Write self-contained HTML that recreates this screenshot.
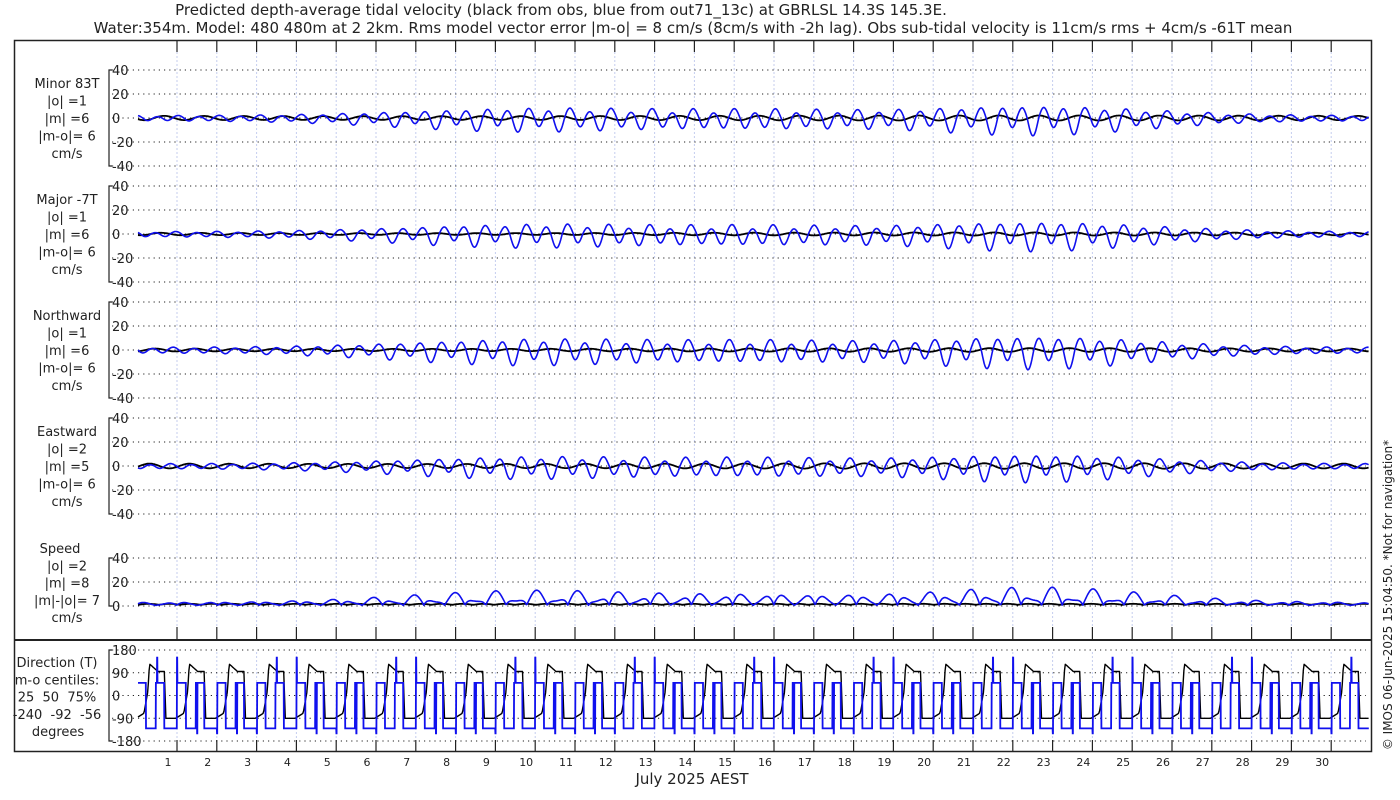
<!DOCTYPE html>
<html><head><meta charset="utf-8"><style>
html,body{margin:0;padding:0;background:#fff;width:1400px;height:800px;overflow:hidden}
svg{display:block;font-family:"DejaVu Sans","Liberation Sans",sans-serif}
text{white-space:pre}
</style></head><body>
<svg id="s" width="1400" height="800" viewBox="0 0 1400 800" xmlns="http://www.w3.org/2000/svg" xml:space="preserve">
<rect width="1400" height="800" fill="#fff"/>
<g font-size="15" fill="#222" text-anchor="middle">
<text x="561" y="15">Predicted depth-average tidal velocity (black from obs, blue from out71_13c) at GBRLSL 14.3S 145.3E.</text>
<text x="693" y="33">Water:354m. Model: 480 480m at 2 2km. Rms model vector error |m-o| = 8 cm/s (8cm/s with -2h lag). Obs sub-tidal velocity is 11cm/s rms + 4cm/s -61T mean</text>
</g>
<g id="grid"></g>
<g id="data"></g>
<rect x="14.5" y="40.5" width="1357" height="711" fill="none" stroke="#222" stroke-width="1.5"/>
<line x1="14" y1="640" x2="1372" y2="640" stroke="#222" stroke-width="2"/>
<g id="txt" font-size="13" fill="#222"></g>
<text x="692" y="784" font-size="15" fill="#222" text-anchor="middle">July 2025 AEST</text>
<text transform="translate(1392,595) rotate(-90)" font-size="12" fill="#222" text-anchor="middle">© IMOS 06-Jun-2025 15:04:50. *Not for navigation*</text>
</svg>
<script>
(function(){
var NS="http://www.w3.org/2000/svg";
function el(p,t,a,txt){var e=document.createElementNS(NS,t);for(var k in a)e.setAttribute(k,a[k]);if(txt!=null){e.setAttributeNS("http://www.w3.org/XML/1998/namespace","xml:space","preserve");e.textContent=txt;}p.appendChild(e);return e;}
var G=document.getElementById('grid'),D=document.getElementById('data'),T=document.getElementById('txt');
var X0=138,DX=39.8,XE=1369;
function X(t){return X0+t*DX;}
for(var d=1;d<=30;d++){var x=177+39.8*(d-1);
 el(G,'line',{x1:x,y1:52,x2:x,y2:627,stroke:'#c4cdee','stroke-width':1,'stroke-dasharray':'2,2'});
 el(G,'line',{x1:x,y1:652,x2:x,y2:740,stroke:'#c4cdee','stroke-width':1,'stroke-dasharray':'2,2'});
 el(G,'line',{x1:x,y1:40,x2:x,y2:52,stroke:'#222','stroke-width':1.2});
 el(G,'line',{x1:x,y1:627,x2:x,y2:640,stroke:'#222','stroke-width':1.2});
 el(G,'line',{x1:x,y1:740,x2:x,y2:751,stroke:'#222','stroke-width':1.2});
 el(T,'text',{x:168+39.8*(d-1),y:766,'font-size':11,'text-anchor':'middle'},String(d));
}
function axis(tp,vals,step){
 var bot=tp+step*(vals.length-1);
 el(G,'path',{d:'M112,'+tp+'H109V'+bot+'H112',fill:'none',stroke:'#222','stroke-width':1.2});
 for(var i=0;i<vals.length;i++){var y=tp+i*step;
  el(G,'line',{x1:112,y1:y,x2:1366,y2:y,stroke:'#222','stroke-width':1,'stroke-dasharray':'1.2,4'});
  el(T,'text',{x:112,y:y+5},vals[i]);}
}
var labels=[["Minor 83T","|o| =1","|m| =6","|m-o|= 6","cm/s"],["Major -7T","|o| =1","|m| =6","|m-o|= 6","cm/s"],["Northward","|o| =1","|m| =6","|m-o|= 6","cm/s"],["Eastward","|o| =2","|m| =5","|m-o|= 6","cm/s"]];
for(var p=0;p<4;p++){var tp=70+116*p;axis(tp,["40","20","0","-20","-40"],24);
 for(var j=0;j<5;j++)el(T,'text',{x:67,y:tp+18+j*17.5,'text-anchor':'middle'},labels[p][j]);}
axis(558,["40","20","0"],24);
var sl=["Speed","|o| =2","|m| =8","|m|-|o|= 7","cm/s"];
for(var j=0;j<5;j++)el(T,'text',{x:j==0?60:67,y:553+j*17.3,'text-anchor':'middle'},sl[j]);
axis(650,["180","90","0","-90","-180"],22.75);
var dl=["Direction (T)","m-o centiles:","25  50  75%","-240  -92  -56","degrees"];
for(var j=0;j<5;j++)el(T,'text',{x:j==4?58:57,y:667+j*17.3,'text-anchor':'middle'},dl[j]);
function env(t){return 2+7*Math.exp(-Math.pow((t-10)/4.5,2))+9*Math.exp(-Math.pow((t-22.5)/4,2))+4*Math.exp(-Math.pow((t-16)/3,2));}
var W=2*Math.PI/0.5175;
function blue(t,ph,sc){var e=env(t)*sc;var v=e*Math.cos(W*t+ph)+0.3*e*Math.cos(2*Math.PI*t/1.0+ph*0.5);return v<0?v*1.15:v*0.85;}
function black(t,ph,a){return a*Math.cos(2*Math.PI*t/1.0+ph)+0.3*Math.sin(W*t*0.5+ph);}
function path(f,y0,sc,col,w,lo,hi){var s='';for(var t=0;t<=31;t+=0.02){var x=X(t);if(x>XE)break;var v=f(t);if(v>hi)v=hi;if(v<lo)v=lo;s+=(s?'L':'M')+x.toFixed(1)+','+(y0-v*sc).toFixed(1);}
 el(D,'path',{d:s,fill:'none',stroke:col,'stroke-width':w,'stroke-linejoin':'round'});}
var phs=[0.3,1.0,1.8,2.6],sc=[0.9,0.9,1.0,0.85],ba=[1.8,1.0,1.2,2.0];
for(var p=0;p<4;p++){(function(p){var y0=118+116*p;
 path(function(t){return black(t,phs[p]+2,ba[p]);},y0,1.2,'#000',1.8,-40,40);
 path(function(t){return blue(t,phs[p],sc[p]);},y0,1.2,'#1010ee',1.6,-40,40);})(p);}
path(function(t){return 1+0.8*Math.abs(Math.sin(Math.PI*t*1.9));},606,1.2,'#000',1.8,0,40);
path(function(t){return 0.5+1.4*env(t)*Math.pow(Math.abs(Math.sin(Math.PI*t/0.5175+0.4)),0.8)*(0.65+0.35*Math.cos(2*Math.PI*t));},606,1.2,'#1010ee',1.6,0,40);
function bdir(t){var f=((t+0.05)%1+1)%1;
 if(f<0.2)return -90+(f/0.2)*20;
 if(f<0.3)return -70+(f-0.2)/0.1*90;
 if(f<0.34)return 20+(f-0.3)/0.04*105;
 if(f<0.55)return 125-(f-0.34)/0.21*30;
 if(f<0.72)return 95;
 if(f<0.74)return 95-(f-0.72)/0.02*185;
 return -90+(f-0.74)/0.26*0;}
function bldir(t){var f=((t+0.02)%1+1)%1;var v=(f<0.22||(f>0.47&&f<0.68))?50:-130;
 var g=f%0.5; if(g<0.01)v=(Math.floor(t*7)%3==0)?150:-150;return v;}
var y0=695.5,s2=91/360;
path(bdir,y0,s2,'#000',1.4,-180,180);
var s='';for(var t=0;t<=31;t+=0.005){var x=X(t);if(x>XE)break;var v=bldir(t);s+=(s?'L':'M')+x.toFixed(1)+','+(y0-v*s2).toFixed(1);}
el(D,'path',{d:s,fill:'none',stroke:'#1010ee','stroke-width':1.8});
})();
</script>
</body></html>
